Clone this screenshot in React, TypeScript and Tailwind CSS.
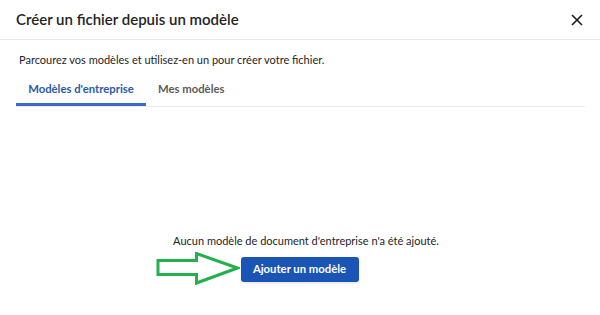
export default function App() {
  return (
    <div
      className="w-[600px] h-[315px] bg-white flex flex-col text-[#242424]"
      style={{ fontFamily: 'Lato, "Open Sans", sans-serif' }}
    >
      <div className="h-[40px] flex items-center justify-between pl-[16px] pr-[15px] border-b border-[#ebebeb]">
        <h1 className="text-[15px] font-semibold">Créer un fichier depuis un modèle</h1>
        <button className="w-[16px] h-[16px] flex items-center justify-center">
          <svg width="12" height="12" viewBox="0 0 12 12" fill="none" stroke="#1a1a1a" strokeWidth="1.6">
            <path d="M1 1 L11 11 M11 1 L1 11" />
          </svg>
        </button>
      </div>
      <div className="px-[16px] flex flex-col flex-1">
        <p className="mt-[12px] text-[11px] text-[#242424] pl-[3px]">
          Parcourez vos modèles et utilisez-en un pour créer votre fichier.
        </p>
        <div className="mt-[7px] flex border-b border-[#ebebeb] w-[569px]">
          <button className="w-[130px] h-[30px] text-[11.3px] font-bold text-[#2b5aa8] border-b-[3px] border-[#3b6dbf] -mb-px pb-[0px]">
            Modèles d'entreprise
          </button>
          <button className="px-[12px] h-[30px] text-[11.3px] font-bold text-[#5c5c5c] pb-[3px]">
            Mes modèles
          </button>
        </div>
        <div className="flex-1 flex flex-col items-center justify-end pb-[29px]">
          <p className="text-[11px] text-[#242424] ml-[12px]">
            Aucun modèle de document d'entreprise n'a été ajouté.
          </p>
          <div className="mt-[3px] flex items-center ml-[-86px]">
            <svg width="84" height="34" viewBox="0 0 84 34" className="mr-[1px]">
              <path
                d="M2 8.5 H40.5 V1.5 L81.5 16 L40.5 31 V22.5 H2 Z"
                fill="none"
                stroke="#22b14c"
                strokeWidth="3"
                strokeLinejoin="miter"
              />
            </svg>
            <button className="w-[118px] h-[25px] rounded-[3px] bg-[#1a54b5] text-white text-[11.3px] font-bold shadow-sm">
              Ajouter un modèle
            </button>
          </div>
        </div>
      </div>
    </div>
  );
}
